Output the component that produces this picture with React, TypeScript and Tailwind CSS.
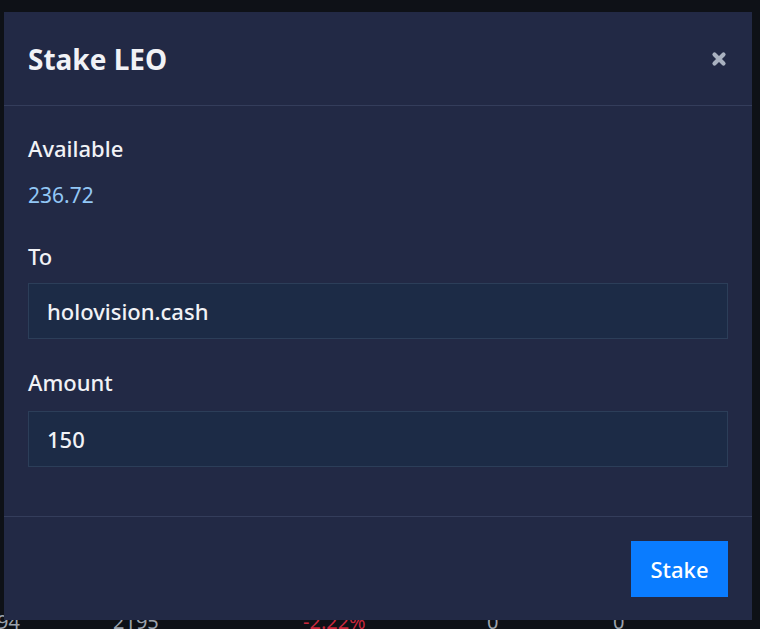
export default function App() {
  const font = { fontFamily: '"Noto Sans", "Open Sans", sans-serif' };
  return (
    <div
      className="relative w-[760px] h-[629px] overflow-hidden bg-[#0e1117]"
      style={font}
    >
      {/* table behind the modal */}
      <div className="pt-[610px] flex text-[20px] leading-[24px] text-[#9ca3ad] -ml-[3px]">
        <div className="w-[116px]">94</div>
        <div className="w-[190px]">2195</div>
        <div className="w-[184px] text-[#c8283c]">-2.22%</div>
        <div className="w-[126px]">0</div>
        <div>0</div>
      </div>

      {/* modal */}
      <div className="absolute left-1 top-3 w-[748px] bg-[#222945] text-[#f1f2f6]">
        <div className="flex items-center justify-between px-6 pt-[29px] pb-7 border-b border-[#343d5b]">
          <h2 className="text-[28px] leading-[36px] font-bold">Stake LEO</h2>
          <button className="w-4 h-4 mr-[1px]">
            <svg viewBox="0 0 16 16" className="w-4 h-4">
              <path
                d="M3.5 3.5 L12.5 12.5 M12.5 3.5 L3.5 12.5"
                stroke="#a9b1c0"
                strokeWidth="4.2"
                strokeLinecap="round"
              />
            </svg>
          </button>
        </div>

        <div className="px-6 pt-6 pb-[49px]">
          <div className="text-[22px] leading-[36px] font-medium">Available</div>
          <div className="mt-[11px] text-[21px] leading-[36px] text-[#92c7f6]">236.72</div>

          <div className="mt-[25px] text-[22px] leading-[36px] font-medium">To</div>
          <div className="mt-[9px] h-14 flex items-center px-[18px] bg-[#1c2b46] border border-[#2c3e59] text-[22px] font-medium">
            holovision.cash
          </div>

          <div className="mt-[25px] text-[22px] leading-[36px] font-medium">Amount</div>
          <div className="mt-[11px] h-14 flex items-center px-[18px] bg-[#1c2b46] border border-[#2c3e59] text-[22px] font-medium">
            150
          </div>
        </div>

        <div className="flex justify-end px-6 pt-6 pb-[23px] border-t border-[#343d5b]">
          <button className="w-[97px] h-14 bg-[#0a7cff] text-white text-[22px] font-medium">
            Stake
          </button>
        </div>
      </div>
    </div>
  );
}
